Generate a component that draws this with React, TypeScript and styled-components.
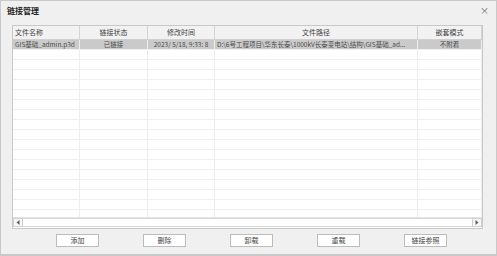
import styled, { createGlobalStyle } from 'styled-components';

const GlobalStyle = createGlobalStyle`
  html, body {
    margin: 0;
    padding: 0;
    background: #ffffff;
  }
  body {
    font-family: "Noto Sans CJK SC", "Noto Sans", sans-serif;
  }
`;

const columns = [
  { title: '文件名称', width: 67 },
  { title: '链接状态', width: 68 },
  { title: '修改时间', width: 67 },
  { title: '文件路径', width: 203 },
  { title: '嵌套模式', width: 66 },
];

const rows = [
  ['GIS基础_admin.p3d', '已链接', '2023/ 5/18, 9:33: 8', 'D:\\6号工程项目\\华东长泰\\1000kV长泰变电站\\结构\\GIS基础_ad...', '不附着'],
];

const EMPTY_ROWS = 17;

export default function App() {
  return (
    <>
      <GlobalStyle />
      <Window>
        <TitleBar>
          <Title>链接管理</Title>
          <Close>×</Close>
        </TitleBar>
        <Body>
          <Grid>
            <HeaderRow>
              {columns.map((c, i) => (
                <HeaderCell key={c.title} $w={c.width} $first={i === 0}>
                  {c.title}
                </HeaderCell>
              ))}
            </HeaderRow>
            <Rows>
              {rows.map((r, ri) => (
                <Row key={ri} $selected>
                  {r.map((v, i) => (
                    <Cell key={i} $w={columns[i].width} $left={i === 0 || i === 3}>
                      {v}
                    </Cell>
                  ))}
                </Row>
              ))}
              {Array.from({ length: EMPTY_ROWS }).map((_, ri) => (
                <Row key={'e' + ri}>
                  {columns.map((c, i) => (
                    <Cell key={i} $w={c.width} />
                  ))}
                </Row>
              ))}
            </Rows>
            <ScrollBar>
              <ArrowBox>
                <svg width="4" height="5" viewBox="0 0 4 5">
                  <path d="M3.5 0 L0.5 2.5 L3.5 5 Z" fill="#606060" />
                </svg>
              </ArrowBox>
              <Track />
              <ArrowBox>
                <svg width="4" height="5" viewBox="0 0 4 5">
                  <path d="M0.5 0 L3.5 2.5 L0.5 5 Z" fill="#606060" />
                </svg>
              </ArrowBox>
            </ScrollBar>
          </Grid>
          <ButtonBar>
            <Button>添加</Button>
            <Button>删除</Button>
            <Button>卸载</Button>
            <Button>重载</Button>
            <Button>链接参照</Button>
          </ButtonBar>
        </Body>
      </Window>
    </>
  );
}

const Window = styled.div`
  width: 497px;
  height: 256px;
  box-sizing: border-box;
  background: #f0f0f0;
  border: 1px solid #c9c9c9;
  border-bottom-width: 2px;
  display: flex;
  flex-direction: column;
`;

const TitleBar = styled.div`
  height: 22px;
  display: flex;
  align-items: center;
  justify-content: space-between;
  padding: 0 7px 4px 6px;
  box-sizing: border-box;
`;

const Title = styled.div`
  font-size: 8px;
  font-weight: bold;
  color: #222;
`;

const Close = styled.div`
  font-size: 9px;
  color: #666;
  line-height: 1;
`;

const Body = styled.div`
  flex: 1;
  display: flex;
  flex-direction: column;
  padding: 2px 13px 0 11px;
`;

const Grid = styled.div`
  width: 471px;
  height: 204px;
  box-sizing: border-box;
  border: 1px solid #c8c8c8;
  background: #ffffff;
  display: flex;
  flex-direction: column;
`;

const HeaderRow = styled.div`
  display: flex;
  height: 13px;
  background: #f2f2f2;
  border-bottom: 1px solid #d0d0d0;
`;

const HeaderCell = styled.div<{ $w: number; $first?: boolean }>`
  width: ${p => p.$w}px;
  box-sizing: border-box;
  border-right: 1px solid #d3d3d3;
  font-size: 7px;
  line-height: 13px;
  color: #444;
  text-align: ${p => (p.$first ? 'left' : 'center')};
  padding-left: ${p => (p.$first ? '2px' : '0')};
  white-space: nowrap;
  &:last-child {
    flex: 1;
  }
`;

const Rows = styled.div`
  flex: 1;
  overflow: hidden;
`;

const Row = styled.div<{ $selected?: boolean }>`
  display: flex;
  height: 10px;
  background: ${p => (p.$selected ? '#cacaca' : '#ffffff')};
  border-bottom: 1px solid #f0f0f0;
  box-sizing: border-box;
`;

const Cell = styled.div<{ $w: number; $left?: boolean }>`
  width: ${p => p.$w}px;
  box-sizing: border-box;
  border-right: 1px solid #ededed;
  font-size: 6.5px;
  line-height: 9px;
  color: #4a4a4a;
  text-align: ${p => (p.$left ? 'left' : 'center')};
  padding-left: ${p => (p.$left ? '2px' : '0')};
  white-space: nowrap;
  overflow: hidden;
  &:last-child {
    flex: 1;
  }
`;

const ScrollBar = styled.div`
  display: flex;
  height: 10px;
  border-top: 1px solid #e4e4e4;
  background: #ffffff;
`;

const ArrowBox = styled.div`
  width: 10px;
  height: 9px;
  box-sizing: border-box;
  border: 1px solid #cfcfcf;
  background: #f7f7f7;
  display: flex;
  align-items: center;
  justify-content: center;
`;

const Track = styled.div`
  flex: 1;
  border-top: 1px solid #d8d8d8;
  border-bottom: 1px solid #d8d8d8;
  box-sizing: border-box;
  height: 9px;
`;

const ButtonBar = styled.div`
  display: flex;
  gap: 44px;
  padding: 5px 0 0 44px;
`;

const Button = styled.div`
  width: 43px;
  height: 13px;
  box-sizing: border-box;
  border: 1px solid #bcbcbc;
  background: #ffffff;
  font-size: 7px;
  line-height: 11px;
  text-align: center;
  color: #444;
`;
